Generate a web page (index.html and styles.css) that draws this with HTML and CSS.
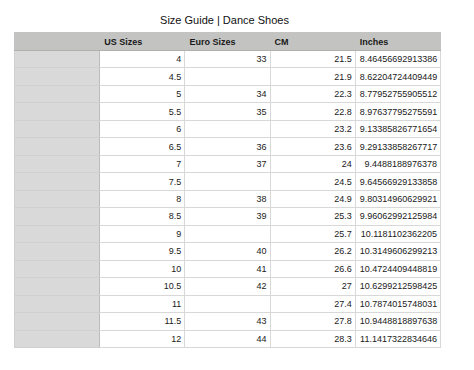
FILE: index.html
```html
<!DOCTYPE html>
<html>
<head>
<meta charset="utf-8">
<link rel="stylesheet" href="styles.css">
</head>
<body>
<div class="page">
  <h1 class="title">Size Guide | Dance Shoes</h1>
  <table class="sheet">
    <thead>
      <tr><th class="corner"></th><th>US Sizes</th><th>Euro Sizes</th><th>CM</th><th>Inches</th></tr>
    </thead>
    <tbody>
      <tr><td class="rh"></td><td>4</td><td>33</td><td>21.5</td><td>8.46456692913386</td></tr>
      <tr><td class="rh"></td><td>4.5</td><td></td><td>21.9</td><td>8.62204724409449</td></tr>
      <tr><td class="rh"></td><td>5</td><td>34</td><td>22.3</td><td>8.77952755905512</td></tr>
      <tr><td class="rh"></td><td>5.5</td><td>35</td><td>22.8</td><td>8.97637795275591</td></tr>
      <tr><td class="rh"></td><td>6</td><td></td><td>23.2</td><td>9.13385826771654</td></tr>
      <tr><td class="rh"></td><td>6.5</td><td>36</td><td>23.6</td><td>9.29133858267717</td></tr>
      <tr><td class="rh"></td><td>7</td><td>37</td><td>24</td><td>9.4488188976378</td></tr>
      <tr><td class="rh"></td><td>7.5</td><td></td><td>24.5</td><td>9.64566929133858</td></tr>
      <tr><td class="rh"></td><td>8</td><td>38</td><td>24.9</td><td>9.80314960629921</td></tr>
      <tr><td class="rh"></td><td>8.5</td><td>39</td><td>25.3</td><td>9.96062992125984</td></tr>
      <tr><td class="rh"></td><td>9</td><td></td><td>25.7</td><td>10.1181102362205</td></tr>
      <tr><td class="rh"></td><td>9.5</td><td>40</td><td>26.2</td><td>10.3149606299213</td></tr>
      <tr><td class="rh"></td><td>10</td><td>41</td><td>26.6</td><td>10.4724409448819</td></tr>
      <tr><td class="rh"></td><td>10.5</td><td>42</td><td>27</td><td>10.6299212598425</td></tr>
      <tr><td class="rh"></td><td>11</td><td></td><td>27.4</td><td>10.7874015748031</td></tr>
      <tr><td class="rh"></td><td>11.5</td><td>43</td><td>27.8</td><td>10.9448818897638</td></tr>
      <tr><td class="rh"></td><td>12</td><td>44</td><td>28.3</td><td>11.1417322834646</td></tr>
    </tbody>
  </table>
</div>
</body>
</html>
```
FILE: styles.css
```css
html, body {
  margin: 0;
  padding: 0;
  background: #ffffff;
}
body {
  font-family: "Liberation Sans", Arial, sans-serif;
  color: #1a1a1a;
}
.page {
  width: 427px;
  padding: 0 0 0 14px;
}
.title {
  margin: 0;
  padding: 14px 6px 0 0;
  height: 18px;
  font-size: 11px;
  font-weight: normal;
  line-height: 13px;
  text-align: center;
  color: #111;
}
.sheet {
  width: 427px;
  table-layout: fixed;
  border-collapse: collapse;
  font-size: 9px;
}
.sheet th,
.sheet td {
  border: 1px solid #d8d8d8;
  padding: 0 3px 0 4px;
  overflow: hidden;
  white-space: nowrap;
}
.sheet th {
  background: #c3c3c1;
  height: 17px;
  text-align: left;
  font-weight: bold;
  color: #1a1a1a;
  border-color: #c3c3c1;
  border-bottom-color: #b0b0ae;
}
.sheet td {
  height: 16.47px;
  text-align: right;
}
.sheet td.rh {
  background: #d9d9d9;
  border-color: #d0d0d0;
  border-right-color: #bcbcbc;
}
```
